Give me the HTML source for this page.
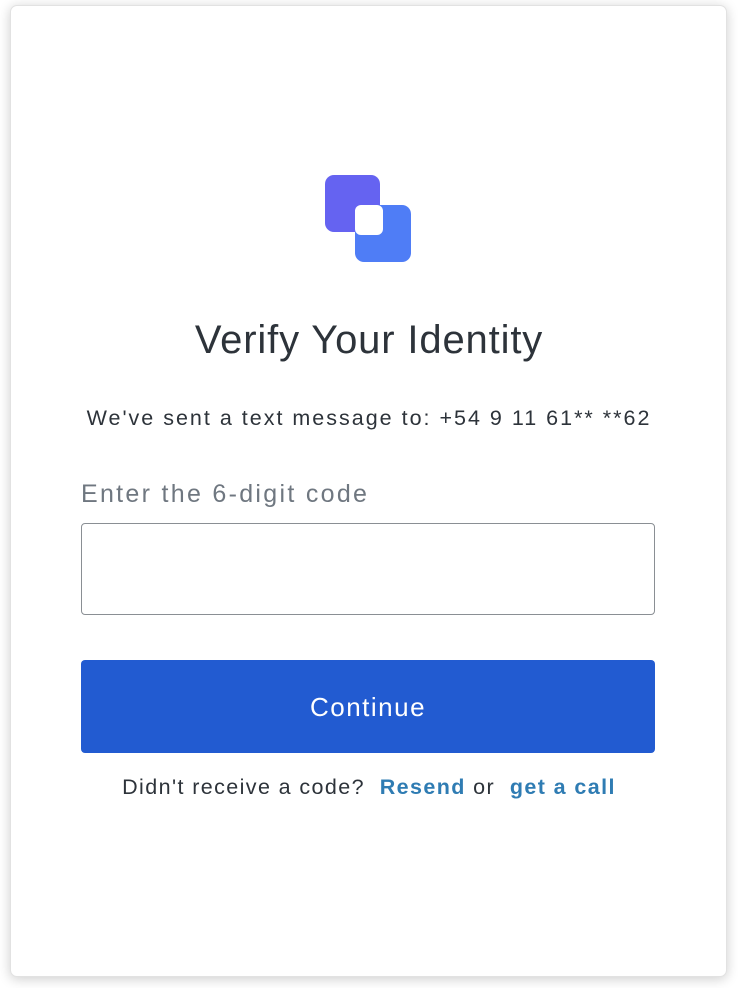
<!DOCTYPE html>
<html><head><meta charset="utf-8"><style>
html,body{margin:0;padding:0;background:#fff;}
body{width:738px;height:988px;position:relative;overflow:hidden;font-family:"Liberation Sans",Helvetica,Arial,sans-serif;}
.card{position:absolute;left:10px;top:5px;width:717px;height:972px;background:#fff;border:1px solid #e2e2e2;border-radius:7px;box-shadow:0 2px 12px rgba(0,0,0,0.2);box-sizing:border-box;}
.abs{position:absolute;}
h1{position:absolute;left:0;width:738px;top:318px;margin:0;text-align:center;font-weight:400;font-size:40px;letter-spacing:0.85px;color:#2d333a;}
.sent{top:406px;left:0;width:738px;text-align:center;font-size:21.5px;letter-spacing:2px;color:#2d333a;}
.lbl{top:480px;left:81px;font-size:25px;letter-spacing:2.3px;color:#6f7780;}
.inp{left:81px;top:523px;width:574px;height:92px;border:1px solid #8a8f94;border-radius:4px;box-sizing:border-box;}
.btn{left:81px;top:660px;width:574px;height:93px;background:#225bd1;border-radius:4px;color:#fff;font-size:26px;letter-spacing:1.5px;text-align:center;line-height:95px;}
.foot{top:775px;left:0;width:738px;text-align:center;font-size:21.5px;letter-spacing:1.4px;color:#2d333a;}
.foot b{color:#2f7cb3;}
</style></head><body>
<div class="card"></div>
<svg class="abs" style="left:0;top:0" width="738" height="300">
<rect x="325" y="175" width="55" height="57" rx="9" fill="#6563f1"/>
<rect x="355" y="205" width="56" height="57" rx="9" fill="#4f7df6"/>
<rect x="355" y="205" width="28" height="30" rx="6" fill="#fff"/>
</svg>
<h1>Verify Your Identity</h1>
<div class="abs sent">We've sent a text message to: +54 9 11 61** **62</div>
<div class="abs lbl">Enter the 6-digit code</div>
<div class="abs inp"></div>
<div class="abs btn">Continue</div>
<div class="abs foot">Didn't receive a code? &nbsp;<b>Resend</b>&nbsp;or &nbsp;<b>get a call</b></div>
</body></html>
